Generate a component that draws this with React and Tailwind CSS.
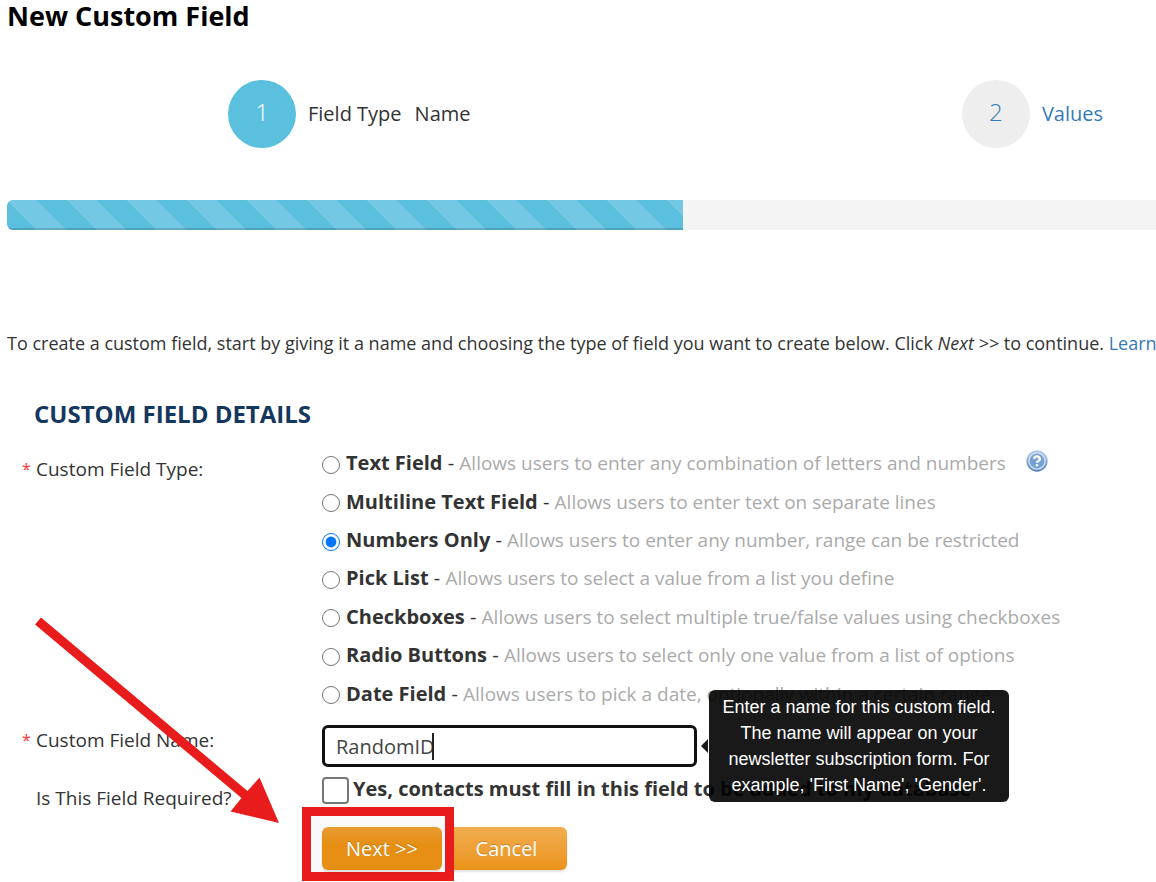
import React, { useState } from "react";

const fieldTypes = [
  { id: "text", name: "Text Field", hint: "Allows users to enter any combination of letters and numbers", help: true },
  { id: "multiline", name: "Multiline Text Field", hint: "Allows users to enter text on separate lines" },
  { id: "number", name: "Numbers Only", hint: "Allows users to enter any number, range can be restricted" },
  { id: "picklist", name: "Pick List", hint: "Allows users to select a value from a list you define" },
  { id: "checkbox", name: "Checkboxes", hint: "Allows users to select multiple true/false values using checkboxes" },
  { id: "radio", name: "Radio Buttons", hint: "Allows users to select only one value from a list of options" },
  { id: "date", name: "Date Field", hint: "Allows users to pick a date, optionally within a certain range" },
];

function HelpIcon() {
  return (
    <svg className="size-[22px]" viewBox="0 0 24 24" aria-hidden="true">
      <defs>
        <linearGradient id="ring" x1="0" y1="0" x2="0" y2="1">
          <stop offset="0" stopColor="#b9d0ec" />
          <stop offset="1" stopColor="#5482bb" />
        </linearGradient>
        <linearGradient id="disc" x1="0" y1="0" x2="0" y2="1">
          <stop offset="0" stopColor="#7fa3d2" />
          <stop offset="1" stopColor="#6c9fd8" />
        </linearGradient>
      </defs>
      <circle cx="12" cy="12" r="11.6" fill="url(#ring)" />
      <circle cx="12" cy="12" r="8.8" fill="url(#disc)" stroke="#d3e2f4" strokeWidth="1.5" />
      <path d="M9 9.8a3 2.7 0 1 1 4.4 2.2c-1 .6-1.4 1-1.4 2" fill="none" stroke="#fff" strokeWidth="2.5" />
      <circle cx="12" cy="16.6" r="1.4" fill="#fff" />
    </svg>
  );
}

function Label({ required, htmlFor, children }) {
  return (
    <label htmlFor={htmlFor} className="flex text-[19px]">
      <span className="w-[14px] shrink-0 text-[16px] text-[#f33]">{required ? "*" : ""}</span>
      <span>{children}</span>
    </label>
  );
}

export default function App() {
  const [type, setType] = useState("number");
  const [name, setName] = useState("RandomID");
  const [required, setRequired] = useState(false);
  const progress = 58.83;

  return (
    <main className="relative min-h-screen overflow-hidden bg-white pl-[7px] font-['Open_Sans','Noto_Sans',sans-serif] text-[20px] leading-[30px] text-[#333]">
      <h1 className="text-[27px] leading-8 font-bold text-black">New Custom Field</h1>

      <nav className="mt-12 flex justify-between pr-[53px] pl-[221px]">
        <a href="#type" className="flex items-center gap-3">
          <span className="flex size-[68px] items-center justify-center rounded-full bg-[#5bc0de] pb-1 text-[24px] font-light text-white">1</span>
          <span className="flex gap-[13px]"><span>Field Type</span><span>Name</span></span>
        </a>
        <a href="#values" className="flex items-center gap-3 text-[#337ab7]">
          <span className="flex size-[68px] items-center justify-center rounded-full bg-[#eee] pb-1 text-[24px] font-light">2</span>
          <span>Values</span>
        </a>
      </nav>

      <div className="mt-[52px] h-[30px] overflow-hidden rounded-l-md bg-[#f4f4f4]">
        <div
          className="h-full bg-[#5bc0de] bg-[linear-gradient(45deg,rgba(255,255,255,.15)_25%,transparent_25%,transparent_50%,rgba(255,255,255,.15)_50%,rgba(255,255,255,.15)_75%,transparent_75%,transparent)] bg-[length:60px_60px] shadow-[inset_0_-2px_0_rgba(0,0,0,.15)]"
          style={{ width: `${progress}%` }}
        />
      </div>

      <p className="mt-[98px] overflow-hidden text-[18px] whitespace-nowrap">
        To create a custom field, start by giving it a name and choosing the type of field you want to create below. Click{" "}
        <em>Next &gt;&gt;</em> to continue. <a href="#learn" className="text-[#337ab7]">Learn more</a>
      </p>

      <h2 className="mt-10 pl-[27px] text-[24px] leading-8 font-bold text-[#14375e] uppercase">Custom Field Details</h2>

      <form className="mt-[14px] grid grid-cols-[300px_1fr] pl-[15px]" onSubmit={(e) => e.preventDefault()}>
        <div className="pt-[10px]"><Label required htmlFor="type-text">Custom Field Type:</Label></div>
        <div className="grid h-[269px] auto-rows-fr">
          {fieldTypes.map((t) => (
            <div key={t.id} className="flex items-center whitespace-nowrap">
              <input
                type="radio"
                id={`type-${t.id}`}
                name="type"
                checked={type === t.id}
                onChange={() => setType(t.id)}
                className="mt-[3px] mr-[6px] size-[18px] accent-[#0075ff]"
              />
              <label htmlFor={`type-${t.id}`}>
                <b>{t.name}</b> - <span className="text-[19px] text-[#aaa]">{t.hint}</span>
              </label>
              {t.help && (
                <button type="button" aria-label="Help" className="mb-1 ml-5"><HelpIcon /></button>
              )}
            </div>
          ))}
        </div>

        <div className="pt-3"><Label required htmlFor="name">Custom Field Name:</Label></div>
        <div className="pt-3">
          <div className="relative w-[375px]">
            <input
              id="name"
              type="text"
              value={name}
              onChange={(e) => setName(e.target.value)}
              className="block h-[42px] w-full rounded-md border-[3px] border-[#101010] bg-white px-[11px] text-[20px] text-[#444] outline-none"
            />
            <span className="absolute top-2 left-[110px] h-[27px] w-[2px] bg-[#222]" />
            <div role="tooltip" className="absolute top-[-35px] left-[387px] w-[300px] rounded-md bg-black/90 px-2 py-1 text-center font-['Liberation_Sans',Arial,sans-serif] text-[18px] leading-[26px] text-white">
              Enter a name for this custom field. The name will appear on your newsletter subscription form. For example, 'First Name', 'Gender'.
              <svg className="absolute top-[49px] left-[-8px] h-[14px] w-[7px]" viewBox="0 0 7 14" aria-hidden="true">
                <path d="M7 0v14L0 7z" fill="#1a1a1a" />
              </svg>
            </div>
          </div>
        </div>

        <div className="pt-4"><Label htmlFor="required">Is This Field Required?</Label></div>
        <div className="flex items-start pt-[7px] whitespace-nowrap">
          <input
            id="required"
            type="checkbox"
            checked={required}
            onChange={(e) => setRequired(e.target.checked)}
            className="mt-[3px] mr-1 size-[27px] shrink-0 appearance-none rounded-[4px] border-2 border-[#777] bg-white checked:bg-[#0075ff]"
          />
          <label htmlFor="required" className="font-bold">Yes, contacts must fill in this field to be added to my database</label>
        </div>

        <div className="col-start-2 flex gap-1 pt-[14px]">
          <div className="relative">
            <span className="pointer-events-none absolute -top-5 -right-3 -bottom-[11px] -left-5 border-[9px] border-[#e81c1c] bg-[#fafafa]" />
            <button type="submit" className="relative h-[43px] w-[120px] rounded-md bg-linear-to-b from-[#e89c30] to-[#e68f14] to-40% text-white shadow-[0_2px_2px_rgba(0,0,0,.12)] [text-shadow:0_-1px_0_rgba(0,0,0,.2)]">Next &gt;&gt;</button>
          </div>
          <button type="button" className="h-[43px] w-[121px] rounded-md bg-linear-to-b from-[#f0ad4e] to-[#eb9316] text-white shadow-[0_2px_2px_rgba(0,0,0,.12)] [text-shadow:0_-1px_0_rgba(0,0,0,.2)]">Cancel</button>
        </div>
      </form>

      <svg className="pointer-events-none absolute top-[616px] left-[33px] h-[210px] w-[248px]" viewBox="33 616 248 210" aria-hidden="true">
        <path d="M41 617.5 247.5 791 259.5 777.5 279 823 230.5 811.5 241.5 798 35 624.5Z" fill="#e81c1c" />
      </svg>
    </main>
  );
}
